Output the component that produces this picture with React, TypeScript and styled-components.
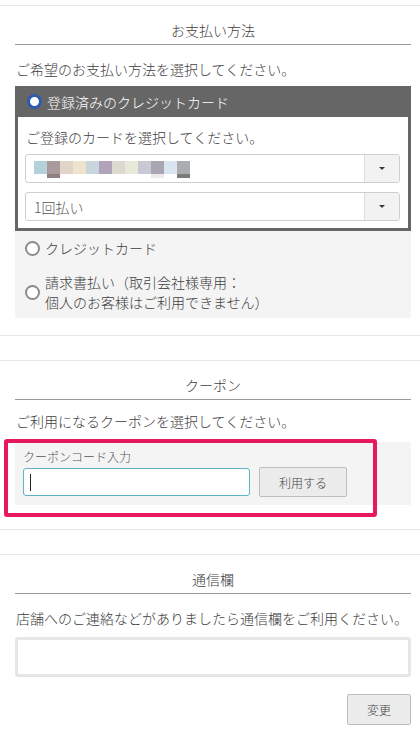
import React from 'react';
import styled, { createGlobalStyle } from 'styled-components';

const GlobalStyle = createGlobalStyle`
  body {
    margin: 0;
    background: #fff;
    font-family: "Noto Sans CJK JP", "Liberation Sans", sans-serif;
    font-weight: 300;
    color: #404040;
    font-size: 14px;
  }
`;

const Page = styled.div`
  padding-top: 5px;
`;

const Section = styled.section<{ $bottom: number }>`
  border-top: 1px solid #e6e6e6;
  border-bottom: 1px solid #e6e6e6;
  padding: 0 9px ${p => p.$bottom}px 15px;
  & + & {
    margin-top: 24px;
  }
`;

const Heading = styled.h2`
  margin: 0;
  padding: 14px 0 4px;
  font-size: 14px;
  font-weight: 300;
  line-height: 20px;
  text-align: center;
  border-bottom: 1px solid #9a9a9a;
`;

const Lead = styled.p<{ $top: number; $bottom: number }>`
  margin: ${p => p.$top}px 0 ${p => p.$bottom}px 1px;
  line-height: 20px;
`;

const OptionList = styled.div`
  background: #f4f4f4;
`;

const SelectedOption = styled.div`
  background: #fff;
`;

const OptionHeader = styled.label`
  display: flex;
  align-items: center;
  gap: 5px;
  height: 31px;
  padding: 0 12px;
  background: #666;
  color: #fff;
  line-height: 20px;
`;

const OptionBody = styled.div`
  border: 3px solid #666;
  border-top: none;
  padding: 10px 8px 7px 7px;
  display: flex;
  flex-direction: column;
  gap: 9px;
`;

const BodyText = styled.p`
  margin: 0 0 -2px 1px;
  line-height: 20px;
`;

const Option = styled.label<{ $top: number; $bottom: number }>`
  display: flex;
  align-items: center;
  gap: 5px;
  padding: ${p => p.$top}px 10px ${p => p.$bottom}px;
  line-height: 20px;
`;

const Radio = styled.span<{ $checked?: boolean }>`
  flex: none;
  box-sizing: border-box;
  width: 15px;
  height: 15px;
  border-radius: 50%;
  background: #fff;
  border: ${p => (p.$checked ? '3.5px solid #2c5cab' : '2px solid #8c8c8c')};
`;

const Select = styled.div`
  display: flex;
  height: 29px;
  box-sizing: border-box;
  border: 1px solid #cfcfcf;
  border-radius: 3px;
  background: #fff;
  overflow: hidden;
`;

const SelectValue = styled.div`
  flex: 1;
  display: flex;
  align-items: center;
  padding-left: 8px;
  color: #555;
`;

const SelectArrow = styled.div`
  width: 34px;
  border-left: 1px solid #dcdcdc;
  background: #f2f2f2;
  display: flex;
  align-items: center;
  justify-content: center;
  &::after {
    content: '';
    border-left: 3.5px solid transparent;
    border-right: 3.5px solid transparent;
    border-top: 3.5px solid #3a3a3a;
  }
`;

const Masked = styled.div`
  display: flex;
  height: 17px;
  align-self: flex-start;
  margin-top: 6px;
`;

const MaskBlock = styled.span<{ $color: string; $tail?: string }>`
  width: 13px;
  height: 17px;
  background: linear-gradient(
    ${p => p.$color} 0 13px,
    ${p => p.$tail ?? '#fff'} 13px 17px
  );
`;

const CouponBox = styled.div`
  position: relative;
  background: #f4f4f4;
  padding: 7px 8px 8px;
`;

const Highlight = styled.div`
  position: absolute;
  left: -11px;
  top: -3px;
  width: 373px;
  height: 78px;
  box-sizing: border-box;
  border: 4px solid #e8185c;
  border-radius: 3px;
  pointer-events: none;
`;

const FieldLabel = styled.div`
  font-size: 12px;
  line-height: 16px;
  margin-bottom: 2px;
  color: #555;
`;

const FieldRow = styled.div`
  display: flex;
  align-items: center;
  gap: 9px;
`;

const CodeField = styled.div`
  box-sizing: border-box;
  width: 227px;
  height: 28px;
  border: 1px solid #5fb3c2;
  border-radius: 3px;
  background: #fff;
  display: flex;
  align-items: center;
  padding-left: 6px;
`;

const Caret = styled.span`
  width: 1px;
  height: 17px;
  background: #222;
`;

const Button = styled.button<{ $width: number }>`
  box-sizing: border-box;
  width: ${p => p.$width}px;
  height: 30px;
  border: 1px solid #bdbdbd;
  border-radius: 2px;
  background: #ececec;
  color: #444;
  font-family: inherit;
  font-weight: 300;
  font-size: 12px;
  padding: 0;
`;

const Message = styled.div`
  box-sizing: border-box;
  height: 40px;
  border: 3px solid #e6e6e6;
  border-radius: 3px;
`;

const Actions = styled.div`
  display: flex;
  justify-content: flex-end;
  margin-top: 17px;
  & > button {
    height: 31px;
  }
`;

const cardMask: { color: string; tail?: string }[] = [
  { color: '#b4d1d9' },
  { color: '#a99b9b', tail: '#8f7f7f' },
  { color: '#e0d5c6' },
  { color: '#efe3cd' },
  { color: '#c9d5dd' },
  { color: '#b1a3b9' },
  { color: '#ddd9d1' },
  { color: '#e8ead9' },
  { color: '#c9c9d5' },
  { color: '#a9a5b1', tail: '#efe9ea' },
  { color: '#d9e5f1' },
  { color: '#a9adb1', tail: '#7b7b7b' },
];

export default function App() {
  return (
    <>
      <GlobalStyle />
      <Page>
        <Section $bottom={17}>
          <Heading>お支払い方法</Heading>
          <Lead $top={14} $bottom={7}>ご希望のお支払い方法を選択してください。</Lead>
          <OptionList>
            <SelectedOption>
              <OptionHeader>
                <Radio $checked />
                登録済みのクレジットカード
              </OptionHeader>
              <OptionBody>
                <BodyText>ご登録のカードを選択してください。</BodyText>
                <Select>
                  <SelectValue>
                    <Masked>
                      {cardMask.map((b, i) => (
                        <MaskBlock key={i} $color={b.color} $tail={b.tail} />
                      ))}
                    </Masked>
                  </SelectValue>
                  <SelectArrow />
                </Select>
                <Select>
                  <SelectValue>1回払い</SelectValue>
                  <SelectArrow />
                </Select>
              </OptionBody>
            </SelectedOption>
            <Option $top={7} $bottom={7}>
              <Radio />
              クレジットカード
            </Option>
            <Option $top={7} $bottom={6}>
              <Radio />
              <span>
                請求書払い（取引会社様専用：
                <br />
                個人のお客様はご利用できません）
              </span>
            </Option>
          </OptionList>
        </Section>

        <Section $bottom={24}>
          <Heading>クーポン</Heading>
          <Lead $top={11} $bottom={11}>ご利用になるクーポンを選択してください。</Lead>
          <CouponBox>
            <FieldLabel>クーポンコード入力</FieldLabel>
            <FieldRow>
              <CodeField>
                <Caret />
              </CodeField>
              <Button $width={88}>利用する</Button>
            </FieldRow>
            <Highlight />
          </CouponBox>
        </Section>

        <Section $bottom={12}>
          <Heading>通信欄</Heading>
          <Lead $top={14} $bottom={9}>店舗へのご連絡などがありましたら通信欄をご利用ください。</Lead>
          <Message />
          <Actions>
            <Button $width={64}>変更</Button>
          </Actions>
        </Section>
      </Page>
    </>
  );
}
